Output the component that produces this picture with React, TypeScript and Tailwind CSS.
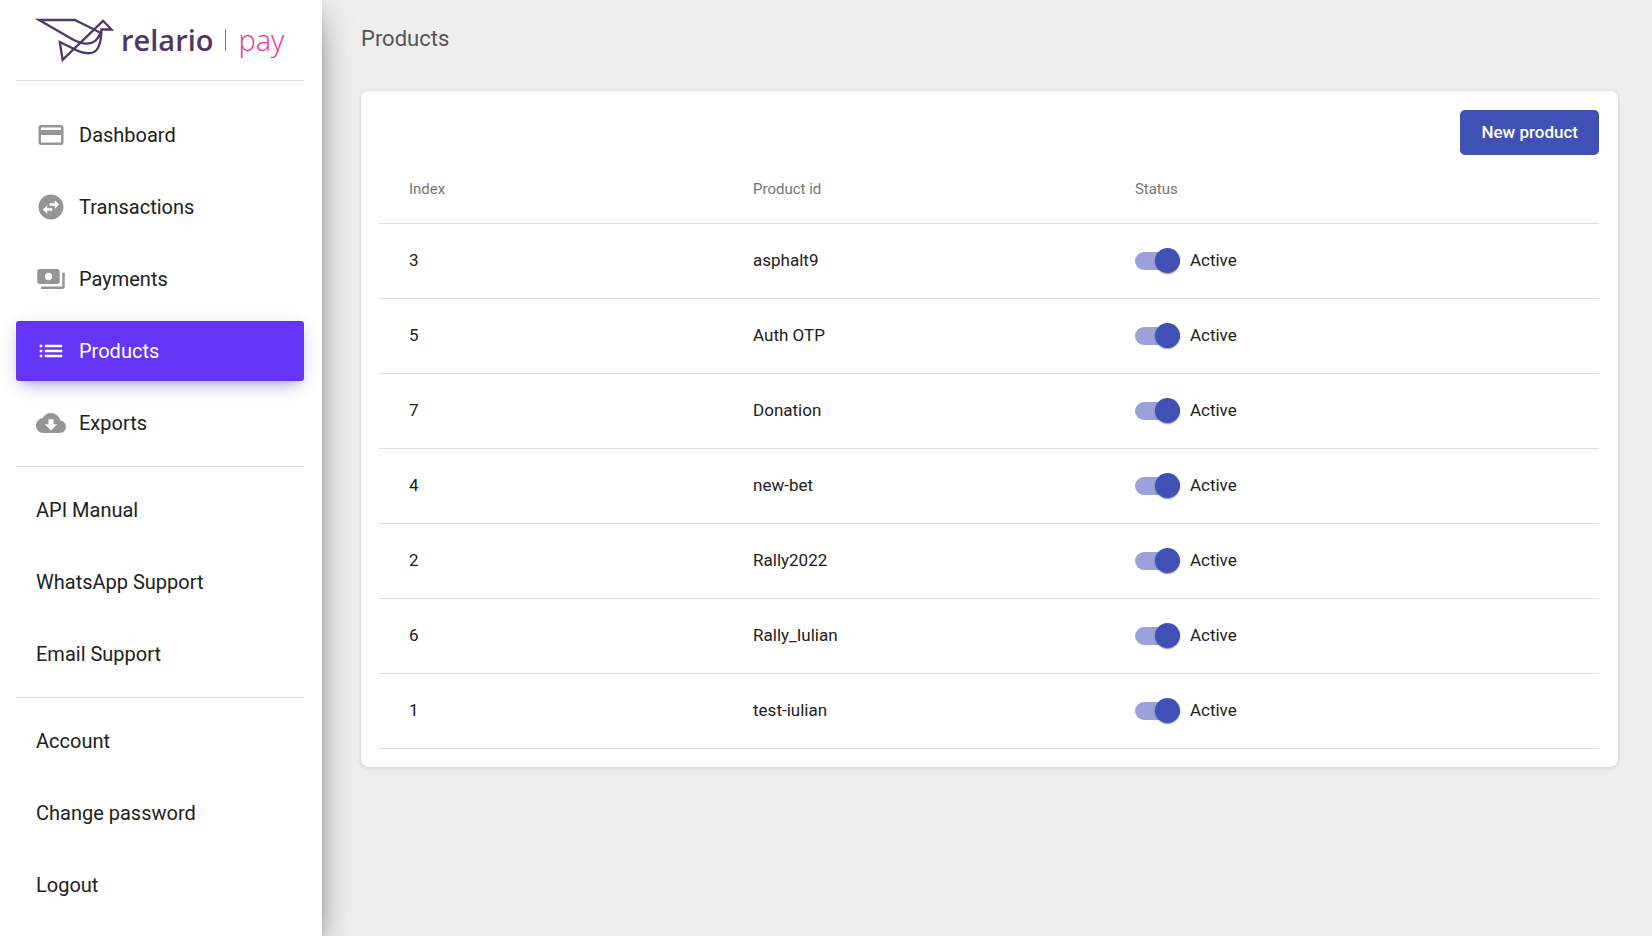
import React, { useState } from 'react';
import type { IconType } from 'react-icons';
import {
  MdCloudDownload,
  MdList,
  MdPayment,
  MdPayments,
  MdSwapHorizontalCircle,
} from 'react-icons/md';

interface NavItem {
  label: string;
  icon?: IconType;
  active?: boolean;
}

const mainLinks: NavItem[] = [
  { label: 'Dashboard', icon: MdPayment },
  { label: 'Transactions', icon: MdSwapHorizontalCircle },
  { label: 'Payments', icon: MdPayments },
  { label: 'Products', icon: MdList, active: true },
  { label: 'Exports', icon: MdCloudDownload },
];

const supportLinks: NavItem[] = [
  { label: 'API Manual' },
  { label: 'WhatsApp Support' },
  { label: 'Email Support' },
];

const accountLinks: NavItem[] = [
  { label: 'Account' },
  { label: 'Change password' },
  { label: 'Logout' },
];

const initialProducts = [
  { index: 3, id: 'asphalt9', active: true },
  { index: 5, id: 'Auth OTP', active: true },
  { index: 7, id: 'Donation', active: true },
  { index: 4, id: 'new-bet', active: true },
  { index: 2, id: 'Rally2022', active: true },
  { index: 6, id: 'Rally_Iulian', active: true },
  { index: 1, id: 'test-iulian', active: true },
];

const Logo = () => (
  <a href="#" className="flex h-20 items-center pl-[19px]">
    <svg viewBox="0 0 80 46" className="h-[46px] w-20 shrink-0" fill="none" stroke="#4d3868" strokeWidth="2.3">
      <path d="M66.500 16.500 C58 11.500 48 7 40 3 H4 L37 22 C46 27 55 28.500 61 23 C64.500 19.500 66 16 66.500 12.500 H76.500 L68 3.800 L27.600 42.800 L24.800 25 L36 30.500 C45 35.500 52 38 58.500 35.300 C64.500 32.500 66.300 23 66.500 12.500" />
    </svg>
    <span className="ml-[6px] flex items-center font-['Open_Sans',sans-serif]">
      <span className="text-[29px] leading-10 font-semibold text-[#4d3868]">relario</span>
      <span className="mx-3 h-[22px] w-px bg-[#f52d92]" />
      <span className="text-[29px] leading-10 font-light text-[#f52d92]">pay</span>
    </span>
  </a>
);

const NavList = ({ items }: { items: NavItem[] }) => (
  <ul className="flex flex-col gap-3">
    {items.map(({ label, icon: Icon, active }) => (
      <li key={label}>
        <a
          href="#"
          className={
            active
              ? 'flex h-[60px] items-center gap-[13px] rounded-[3px] bg-[#6435f5] px-5 text-white shadow-[0_12px_20px_-10px_rgba(100,53,245,0.28),0_4px_20px_0_rgba(0,0,0,0.12),0_7px_8px_-5px_rgba(100,53,245,0.2)]'
              : 'flex h-[60px] items-center gap-[13px] px-5 text-[#212121]'
          }
        >
          {Icon && <Icon className={active ? 'size-[30px] text-white' : 'size-[30px] text-[#959595]'} />}
          {label}
        </a>
      </li>
    ))}
  </ul>
);

const Divider = () => <hr className="my-[13px] border-t border-[#dfdfdf]" />;

interface StatusSwitchProps {
  checked: boolean;
  onChange: () => void;
}

const StatusSwitch = ({ checked, onChange }: StatusSwitchProps) => (
  <label className="flex w-fit cursor-pointer items-center gap-[10px]">
    <input type="checkbox" role="switch" checked={checked} onChange={onChange} className="peer sr-only" />
    <span className="flex h-[18px] w-[45px] items-center rounded-full bg-[#bdbdbd] peer-checked:justify-end peer-checked:bg-[#9aa2d9] peer-checked:*:bg-[#3f51b5]">
      <span className="size-[25px] shrink-0 rounded-full bg-[#fafafa] shadow-[0_2px_1px_-1px_rgba(0,0,0,0.2),0_1px_1px_0_rgba(0,0,0,0.14),0_1px_3px_0_rgba(0,0,0,0.12)]" />
    </span>
    {checked ? 'Active' : 'Inactive'}
  </label>
);

export default function App() {
  const [products, setProducts] = useState(initialProducts);

  const toggle = (index: number) =>
    setProducts((list) => list.map((p) => (p.index === index ? { ...p, active: !p.active } : p)));

  return (
    <div className="flex min-h-screen overflow-hidden bg-[#eeeeee] font-[Roboto,sans-serif] text-[#212121]">
      <aside className="relative w-[322px] shrink-0 bg-white pr-[18px] pl-4 shadow-[0_16px_38px_-12px_rgba(0,0,0,0.56),0_4px_25px_0_rgba(0,0,0,0.12),0_8px_10px_-5px_rgba(0,0,0,0.2)]">
        <Logo />
        <nav className="border-t border-[#dfdfdf] pt-6 text-[20px]">
          <NavList items={mainLinks} />
          <Divider />
          <NavList items={supportLinks} />
          <Divider />
          <NavList items={accountLinks} />
        </nav>
      </aside>

      <main className="min-w-0 flex-1 pr-[34px] pl-[39px]">
        <h1 className="pt-[25px] text-[22px] leading-[28px] text-[#555555]">Products</h1>
        <section className="mt-[38px] rounded-lg bg-white pt-[19px] pr-[19px] pb-[18px] pl-[18px] shadow-[0_1px_4px_0_rgba(0,0,0,0.14)]">
          <div className="flex justify-end">
            <button
              type="button"
              className="h-[45px] rounded-[5px] bg-[#3f51b5] px-[21px] text-[17px] font-medium text-white"
            >
              New product
            </button>
          </div>
          <table className="w-full table-fixed border-collapse text-left text-[17px]">
            <thead>
              <tr className="h-[68px] border-b border-[#dfdfdf] text-[15px] text-[#757575]">
                <th className="w-[28.2%] pl-[30px] font-normal">Index</th>
                <th className="w-[31.3%] pl-[30px] font-normal">Product id</th>
                <th className="pl-[30px] font-normal">Status</th>
              </tr>
            </thead>
            <tbody>
              {products.map((product) => (
                <tr key={product.index} className="h-[75px] border-b border-[#dfdfdf]">
                  <td className="pl-[30px]">{product.index}</td>
                  <td className="pl-[30px]">{product.id}</td>
                  <td className="pl-[30px]">
                    <StatusSwitch checked={product.active} onChange={() => toggle(product.index)} />
                  </td>
                </tr>
              ))}
            </tbody>
          </table>
        </section>
      </main>
    </div>
  );
}
